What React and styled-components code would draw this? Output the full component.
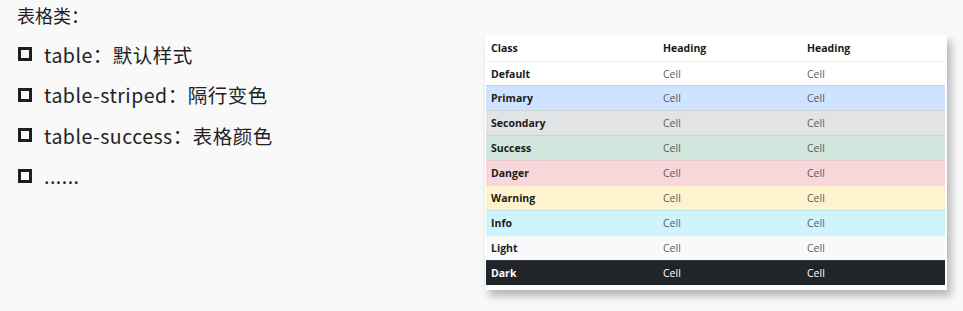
import React from 'react';
import styled, { createGlobalStyle } from 'styled-components';

const GlobalStyle = createGlobalStyle`
  html, body {
    margin: 0;
    padding: 0;
    background: #f9f9f9;
  }
`;

const Page = styled.div`
  width: 963px;
  height: 311px;
  display: flex;
  justify-content: space-between;
  align-items: flex-start;
  overflow: hidden;
  font-family: "Noto Sans CJK SC", "Noto Sans", sans-serif;
  color: #222;
`;

const Notes = styled.div`
  padding: 2px 0 0 17px;
  display: flex;
  flex-direction: column;
`;

const Title = styled.div`
  font-size: 18px;
  line-height: 26px;
  padding-bottom: 6px;
`;

const Item = styled.div`
  display: flex;
  align-items: center;
  gap: 12px;
  height: 40.5px;
  font-size: 19.5px;
  letter-spacing: 0.5px;
`;

const Box = styled.span`
  width: 14px;
  height: 14px;
  box-sizing: border-box;
  border: 3px solid #1e1e1e;
  flex: none;
  margin-left: 1px;
`;

const Card = styled.div`
  margin: 35px 16px 0 0;
  width: 462px;
  background: #fff;
  padding: 0 2px 5px 1px;
  box-sizing: border-box;
  box-shadow: 4px 6px 8px rgba(0, 0, 0, 0.28);
  font-family: "Open Sans", "Noto Sans", sans-serif;
  font-size: 10.5px;
`;

const Table = styled.table`
  width: 100%;
  border-collapse: collapse;
`;

const Row = styled.tr`
  background: ${p => p.$bg || '#fff'};
  color: ${p => (p.$dark ? '#fff' : '#5c5c5c')};
  height: ${p => p.$h || 25}px;
  border-top: 1px solid ${p => p.$line || '#ececec'};
`;

const Cell = styled.td`
  padding: 0 5px;
  font-weight: ${p => (p.$bold ? 700 : 400)};
  color: ${p => (p.$bold ? (p.$dark ? '#fff' : '#1a1a1a') : 'inherit')};
  vertical-align: middle;
`;

const Head = styled.th`
  padding: 0 5px;
  text-align: left;
  font-weight: 700;
  color: #1a1a1a;
  height: 26px;
  width: ${p => p.$w || 'auto'};
`;

const rows = [
  { name: 'Default', bg: '#fff', h: 24 },
  { name: 'Primary', bg: '#cfe2ff', line: '#bfd3f0' },
  { name: 'Secondary', bg: '#e2e3e5', line: '#d3d4d6' },
  { name: 'Success', bg: '#d1e7dd', line: '#c2d8ce' },
  { name: 'Danger', bg: '#f8d7da', line: '#e8c8cb' },
  { name: 'Warning', bg: '#fff3cd', line: '#eee3bf' },
  { name: 'Info', bg: '#cff4fc', line: '#c0e4ec' },
  { name: 'Light', bg: '#f8f9fa', line: '#e8e9ea' },
  { name: 'Dark', bg: '#212529', line: '#32383e', dark: true, h: 24 }
];

const App = () => {
  return (
    <>
      <GlobalStyle />
      <Page>
        <Notes>
          <Title>表格类：</Title>
          <Item>
            <Box />
            <span>table：默认样式</span>
          </Item>
          <Item>
            <Box />
            <span>table-striped：隔行变色</span>
          </Item>
          <Item>
            <Box />
            <span>table-success：表格颜色</span>
          </Item>
          <Item>
            <Box />
            <span>......</span>
          </Item>
        </Notes>
        <Card>
          <Table>
            <thead>
              <tr>
                <Head $w="162px">Class</Head>
                <Head $w="134px">Heading</Head>
                <Head>Heading</Head>
              </tr>
            </thead>
            <tbody>
              {rows.map(r => (
                <Row key={r.name} $bg={r.bg} $line={r.line} $dark={r.dark} $h={r.h}>
                  <Cell $bold $dark={r.dark}>
                    {r.name}
                  </Cell>
                  <Cell>Cell</Cell>
                  <Cell>Cell</Cell>
                </Row>
              ))}
            </tbody>
          </Table>
        </Card>
      </Page>
    </>
  );
};

export default App;
